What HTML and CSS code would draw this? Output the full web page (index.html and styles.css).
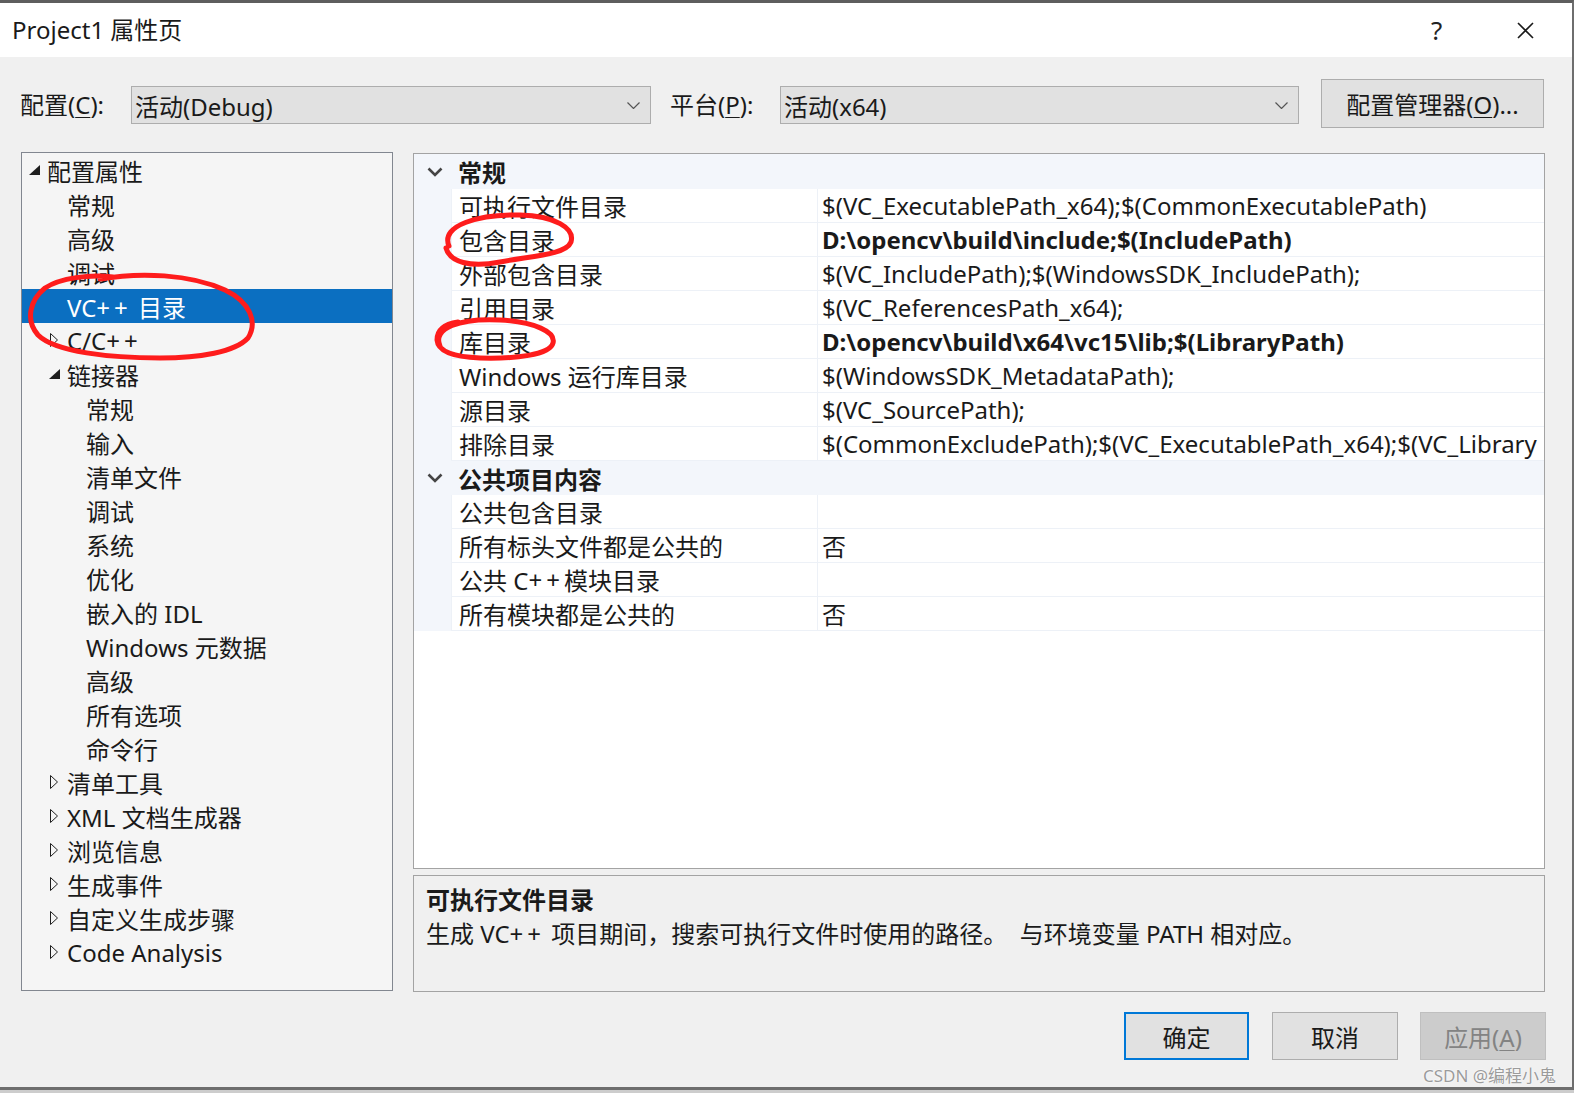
FILE: index.html
```html
<!DOCTYPE html>
<html lang="zh-CN">
<head>
<meta charset="utf-8">
<title>Project1 属性页</title>
<link rel="stylesheet" href="styles.css">
</head>
<body>
<div class="window">
  <div class="titlebar">
    <span class="title">Project1 属性页</span>
    <span class="help">?</span>
    <svg class="close" width="17" height="17" viewBox="0 0 17 17"><path d="M1 1 L16 16 M16 1 L1 16" stroke="#1a1a1a" stroke-width="1.6" fill="none"/></svg>
  </div>

  <div class="config">
    <span class="lbl lbl1">配置(<u>C</u>):</span>
    <div class="combo combo1"><span>活动(Debug)</span><svg width="13" height="7" viewBox="0 0 13 7"><path d="M0.5 0.5 L6.5 6.5 L12.5 0.5" stroke="#555" stroke-width="1.2" fill="none"/></svg></div>
    <span class="lbl lbl2">平台(<u>P</u>):</span>
    <div class="combo combo2"><span>活动(x64)</span><svg width="13" height="7" viewBox="0 0 13 7"><path d="M0.5 0.5 L6.5 6.5 L12.5 0.5" stroke="#555" stroke-width="1.2" fill="none"/></svg></div>
    <button class="btn mgr">配置管理器(<u>O</u>)...</button>
  </div>

  <div class="main">
    <div class="tree">
      <div class="item l0"><span class="exp"><svg width="11" height="10" viewBox="0 0 11 10"><path d="M11 0 L11 10 L0 10 Z" fill="#1e1e1e"/></svg></span><span>配置属性</span></div>
      <div class="item l1"><span class="exp"></span><span>常规</span></div>
      <div class="item l1"><span class="exp"></span><span>高级</span></div>
      <div class="item l1"><span class="exp"></span><span>调试</span></div>
      <div class="item l1 sel"><span class="exp"></span><span>VC<span class="pp">++</span> 目录</span></div>
      <div class="item l1"><span class="exp"><svg width="10" height="16" viewBox="0 0 10 16"><path d="M1.5 1.5 L8.5 8 L1.5 14.5 Z" fill="none" stroke="#1e1e1e" stroke-width="1"/></svg></span><span>C/C<span class="pp">++</span></span></div>
      <div class="item l1"><span class="exp"><svg width="11" height="10" viewBox="0 0 11 10"><path d="M11 0 L11 10 L0 10 Z" fill="#1e1e1e"/></svg></span><span>链接器</span></div>
      <div class="item l2"><span class="exp"></span><span>常规</span></div>
      <div class="item l2"><span class="exp"></span><span>输入</span></div>
      <div class="item l2"><span class="exp"></span><span>清单文件</span></div>
      <div class="item l2"><span class="exp"></span><span>调试</span></div>
      <div class="item l2"><span class="exp"></span><span>系统</span></div>
      <div class="item l2"><span class="exp"></span><span>优化</span></div>
      <div class="item l2"><span class="exp"></span><span>嵌入的 IDL</span></div>
      <div class="item l2"><span class="exp"></span><span>Windows 元数据</span></div>
      <div class="item l2"><span class="exp"></span><span>高级</span></div>
      <div class="item l2"><span class="exp"></span><span>所有选项</span></div>
      <div class="item l2"><span class="exp"></span><span>命令行</span></div>
      <div class="item l1"><span class="exp"><svg width="10" height="16" viewBox="0 0 10 16"><path d="M1.5 1.5 L8.5 8 L1.5 14.5 Z" fill="none" stroke="#1e1e1e" stroke-width="1"/></svg></span><span>清单工具</span></div>
      <div class="item l1"><span class="exp"><svg width="10" height="16" viewBox="0 0 10 16"><path d="M1.5 1.5 L8.5 8 L1.5 14.5 Z" fill="none" stroke="#1e1e1e" stroke-width="1"/></svg></span><span>XML 文档生成器</span></div>
      <div class="item l1"><span class="exp"><svg width="10" height="16" viewBox="0 0 10 16"><path d="M1.5 1.5 L8.5 8 L1.5 14.5 Z" fill="none" stroke="#1e1e1e" stroke-width="1"/></svg></span><span>浏览信息</span></div>
      <div class="item l1"><span class="exp"><svg width="10" height="16" viewBox="0 0 10 16"><path d="M1.5 1.5 L8.5 8 L1.5 14.5 Z" fill="none" stroke="#1e1e1e" stroke-width="1"/></svg></span><span>生成事件</span></div>
      <div class="item l1"><span class="exp"><svg width="10" height="16" viewBox="0 0 10 16"><path d="M1.5 1.5 L8.5 8 L1.5 14.5 Z" fill="none" stroke="#1e1e1e" stroke-width="1"/></svg></span><span>自定义生成步骤</span></div>
      <div class="item l1"><span class="exp"><svg width="10" height="16" viewBox="0 0 10 16"><path d="M1.5 1.5 L8.5 8 L1.5 14.5 Z" fill="none" stroke="#1e1e1e" stroke-width="1"/></svg></span><span>Code Analysis</span></div>
    </div>

    <div class="right">
      <div class="pgrid">
        <div class="cat first"><span class="chev"><svg width="16" height="10" viewBox="0 0 16 10"><path d="M1.5 1.5 L8 8 L14.5 1.5" fill="none" stroke="#454545" stroke-width="2.6"/></svg></span><span class="catname">常规</span></div>
        <div class="prow"><span class="g"></span><span class="n">可执行文件目录</span><span class="v">$(VC_ExecutablePath_x64);$(CommonExecutablePath)</span></div>
        <div class="prow"><span class="g"></span><span class="n">包含目录</span><span class="v b">D:\opencv\build\include;$(IncludePath)</span></div>
        <div class="prow"><span class="g"></span><span class="n">外部包含目录</span><span class="v">$(VC_IncludePath);$(WindowsSDK_IncludePath);</span></div>
        <div class="prow"><span class="g"></span><span class="n">引用目录</span><span class="v">$(VC_ReferencesPath_x64);</span></div>
        <div class="prow"><span class="g"></span><span class="n">库目录</span><span class="v b">D:\opencv\build\x64\vc15\lib;$(LibraryPath)</span></div>
        <div class="prow"><span class="g"></span><span class="n">Windows 运行库目录</span><span class="v">$(WindowsSDK_MetadataPath);</span></div>
        <div class="prow"><span class="g"></span><span class="n">源目录</span><span class="v">$(VC_SourcePath);</span></div>
        <div class="prow"><span class="g"></span><span class="n">排除目录</span><span class="v">$(CommonExcludePath);$(VC_ExecutablePath_x64);$(VC_Library</span></div>
        <div class="cat"><span class="chev"><svg width="16" height="10" viewBox="0 0 16 10"><path d="M1.5 1.5 L8 8 L14.5 1.5" fill="none" stroke="#454545" stroke-width="2.6"/></svg></span><span class="catname">公共项目内容</span></div>
        <div class="prow"><span class="g"></span><span class="n">公共包含目录</span><span class="v"></span></div>
        <div class="prow"><span class="g"></span><span class="n">所有标头文件都是公共的</span><span class="v">否</span></div>
        <div class="prow"><span class="g"></span><span class="n">公共 C<span class="pp">++</span> 模块目录</span><span class="v"></span></div>
        <div class="prow"><span class="g"></span><span class="n">所有模块都是公共的</span><span class="v">否</span></div>
      </div>
      <div class="desc">
        <div class="desc-title">可执行文件目录</div>
        <div class="desc-text">生成 VC<span class="pp">++</span> 项目期间，搜索可执行文件时使用的路径。&nbsp; 与环境变量 PATH 相对应。</div>
      </div>
    </div>
  </div>

  <div class="footer">
    <button class="btn ok">确定</button>
    <button class="btn cancel">取消</button>
    <button class="btn apply">应用(<u>A</u>)</button>
  </div>
</div>

<svg class="annot" width="1574" height="1093" viewBox="0 0 1574 1093">
  <g fill="none" stroke="#fe1c1c" stroke-width="5" stroke-linecap="round" stroke-linejoin="round">
    <path d="M100 279 C140 272 190 274 225 290 C250 302 258 322 248 338 C235 352 200 358 160 358 C110 358 55 352 38 335 C25 320 30 300 45 288 C60 278 90 274 113 277"/>
    <path d="M449 246 C440 225 480 214 520 215 C555 216 575 228 571 242 C566 255 530 256 500 262 C470 268 450 262 446 248"/>
    <path d="M440 346 C432 328 460 318 500 320 C535 322 556 332 553 343 C550 355 515 359 480 358 C455 357 438 352 437 340 C437 330 445 324 458 322"/>
  </g>
</svg>
<div class="watermark">CSDN @编程小鬼</div>
</body>
</html>
```

FILE: styles.css
```css
* { box-sizing: border-box; }
html, body { margin: 0; padding: 0; }
body {
  background: #cdcdcd;
  font-family: "Noto Sans", "Noto Sans CJK SC", sans-serif;
  font-size: 24px;
  color: #1a1a1a;
  width: 1574px;
  height: 1093px;
  position: relative;
  overflow: hidden;
}
u { text-decoration-thickness: 1px; text-underline-offset: 3px; }
.pp { letter-spacing: 4px; }

.window {
  width: 1574px;
  height: 1090px;
  border-top: 3px solid #5e5e5e;
  border-right: 2px solid #6e6e6e;
  border-bottom: 3px solid #6e6e6e;
  background: #f0f0f0;
  display: flex;
  flex-direction: column;
}

.titlebar {
  height: 54px;
  flex: none;
  background: #fff;
  display: flex;
  align-items: center;
  padding-left: 12px;
}
.title { flex: 1; line-height: 1; }
.help { width: 20px; margin-right: 66px; color: #222; font-size: 26px; }
.close { margin-right: 38px; }

.config {
  height: 71px;
  flex: none;
  display: flex;
  align-items: flex-start;
  padding: 22px 0 0 20px;
}
.lbl { line-height: 38px; margin-top: 7px; white-space: nowrap; }
.lbl1 { width: 111px; }
.lbl2 { width: 110px; margin-left: 19px; }
.combo {
  height: 38px;
  margin-top: 7px;
  border: 1px solid #adadad;
  background: #e1e1e1;
  display: flex;
  align-items: center;
  justify-content: space-between;
  padding: 0 10px 0 3px;
}
.combo1 { width: 520px; }
.combo2 { width: 519px; }
.btn {
  font: inherit;
  color: #1a1a1a;
  background: #e1e1e1;
  border: 1px solid #adadad;
  height: 48px;
  padding: 0;
  margin: 0;
}
.mgr { width: 223px; height: 49px; margin-left: 22px; }

.main {
  flex: none;
  display: flex;
  align-items: flex-start;
  padding-left: 21px;
  margin-top: 24px;
  gap: 20px;
}
.tree {
  width: 372px;
  height: 839px;
  border: 1px solid #828790;
  background: #f5f5f5;
  overflow: hidden;
}
.item {
  height: 34px;
  display: flex;
  align-items: center;
  white-space: nowrap;
}
.exp { width: 18px; flex: none; display: flex; align-items: center; }
.l0 { padding-left: 7px; }
.l1 { padding-left: 27px; }
.l2 { padding-left: 46px; }
.sel { background: #0b6fc1; color: #fff; }

.right {
  width: 1132px;
  margin-top: 1px;
  display: flex;
  flex-direction: column;
  gap: 6px;
}
.pgrid {
  height: 716px;
  border: 1px solid #a3a3a3;
  background: #fff;
  overflow: hidden;
  white-space: nowrap;
}
.cat {
  height: 34px;
  background: #f3f6fb;
  display: flex;
  align-items: center;
}
.cat.first { height: 35px; }
.chev { width: 44px; padding-left: 13px; display: flex; align-items: center; }
.catname { font-weight: 700; }
.prow {
  height: 34px;
  display: grid;
  grid-template-columns: 37px 365px 1fr;
  column-gap: 1px;
  background: #edf1f7;
}
.prow .g { background: #f3f6fb; }
.prow .n, .prow .v {
  height: 33px;
  background: #fff;
  display: flex;
  align-items: center;
  overflow: hidden;
}
.prow .n { padding-left: 7px; }
.prow .v { padding-left: 4px; }
.prow .v.b { font-weight: 700; }

.desc {
  height: 117px;
  border: 1px solid #a3a3a3;
  background: #f0f0f0;
  padding: 7px 12px 0;
  line-height: 34px;
}
.desc-title { font-weight: 700; }

.footer {
  flex: none;
  display: flex;
  justify-content: flex-end;
  padding-right: 26px;
  margin-top: 20px;
}
.ok { width: 125px; border: 2px solid #0078d7; }
.cancel { width: 126px; margin-left: 23px; }
.apply { width: 126px; margin-left: 22px; background: #cccccc; border-color: #bfbfbf; color: #838383; }

.annot { position: absolute; left: 0; top: 0; pointer-events: none; }
.watermark {
  position: absolute;
  left: 1423px;
  top: 1064px;
  font-size: 17px;
  line-height: 24px;
  color: #9b9b9b;
  text-shadow: 0 0 2px #fff, 0 0 1px #fff;
  white-space: nowrap;
}
```
